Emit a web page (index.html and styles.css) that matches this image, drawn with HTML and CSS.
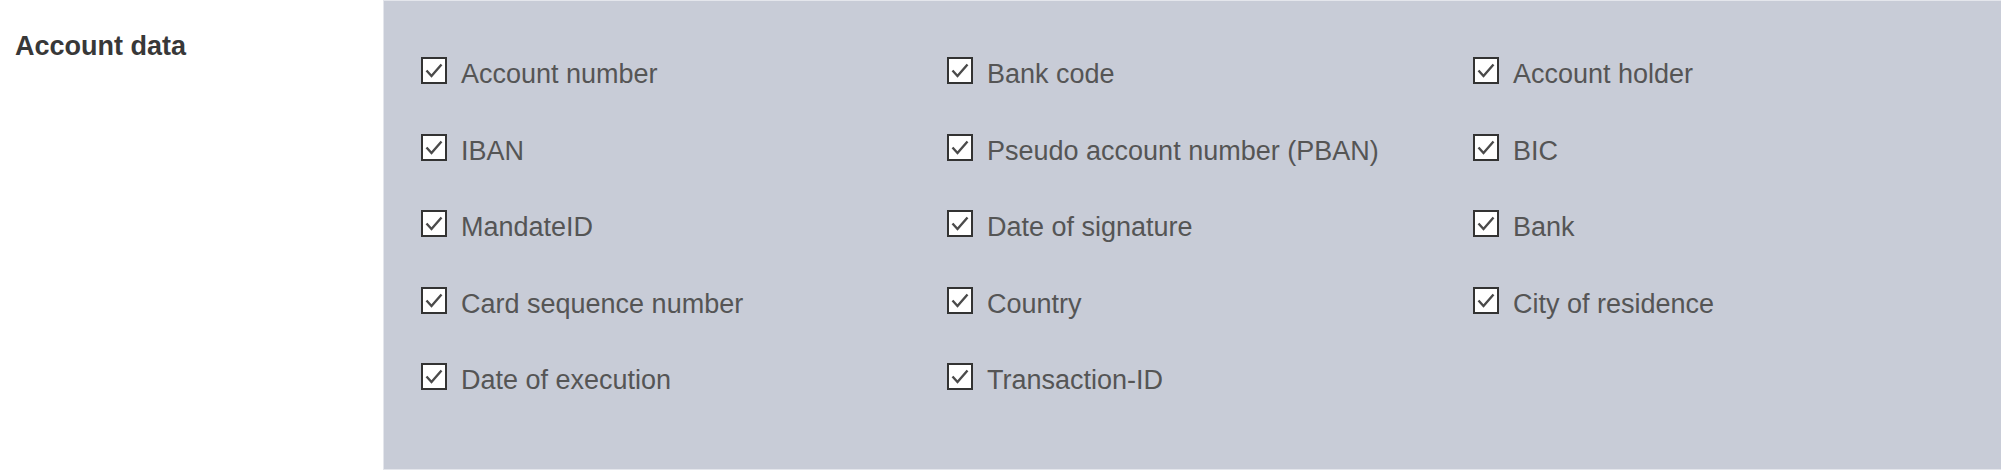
FILE: index.html
```html
<!DOCTYPE html>
<html>
<head>
<meta charset="utf-8">
<link rel="stylesheet" href="styles.css">
</head>
<body>
<div class="section">
  <div class="section-label">Account data</div>
  <div class="panel">
    <div class="grid">
      <label class="item"><svg class="cb" viewBox="0 0 26 27"><rect x="1" y="1" width="24" height="25" fill="#fff" stroke="#333" stroke-width="2"/><polyline points="5.5,13.5 10.5,19 20.5,7.5" fill="none" stroke="#4a4a4a" stroke-width="2.4"/></svg>Account number</label>
      <label class="item"><svg class="cb" viewBox="0 0 26 27"><rect x="1" y="1" width="24" height="25" fill="#fff" stroke="#333" stroke-width="2"/><polyline points="5.5,13.5 10.5,19 20.5,7.5" fill="none" stroke="#4a4a4a" stroke-width="2.4"/></svg>Bank code</label>
      <label class="item"><svg class="cb" viewBox="0 0 26 27"><rect x="1" y="1" width="24" height="25" fill="#fff" stroke="#333" stroke-width="2"/><polyline points="5.5,13.5 10.5,19 20.5,7.5" fill="none" stroke="#4a4a4a" stroke-width="2.4"/></svg>Account holder</label>
      <label class="item"><svg class="cb" viewBox="0 0 26 27"><rect x="1" y="1" width="24" height="25" fill="#fff" stroke="#333" stroke-width="2"/><polyline points="5.5,13.5 10.5,19 20.5,7.5" fill="none" stroke="#4a4a4a" stroke-width="2.4"/></svg>IBAN</label>
      <label class="item"><svg class="cb" viewBox="0 0 26 27"><rect x="1" y="1" width="24" height="25" fill="#fff" stroke="#333" stroke-width="2"/><polyline points="5.5,13.5 10.5,19 20.5,7.5" fill="none" stroke="#4a4a4a" stroke-width="2.4"/></svg>Pseudo account number (PBAN)</label>
      <label class="item"><svg class="cb" viewBox="0 0 26 27"><rect x="1" y="1" width="24" height="25" fill="#fff" stroke="#333" stroke-width="2"/><polyline points="5.5,13.5 10.5,19 20.5,7.5" fill="none" stroke="#4a4a4a" stroke-width="2.4"/></svg>BIC</label>
      <label class="item"><svg class="cb" viewBox="0 0 26 27"><rect x="1" y="1" width="24" height="25" fill="#fff" stroke="#333" stroke-width="2"/><polyline points="5.5,13.5 10.5,19 20.5,7.5" fill="none" stroke="#4a4a4a" stroke-width="2.4"/></svg>MandateID</label>
      <label class="item"><svg class="cb" viewBox="0 0 26 27"><rect x="1" y="1" width="24" height="25" fill="#fff" stroke="#333" stroke-width="2"/><polyline points="5.5,13.5 10.5,19 20.5,7.5" fill="none" stroke="#4a4a4a" stroke-width="2.4"/></svg>Date of signature</label>
      <label class="item"><svg class="cb" viewBox="0 0 26 27"><rect x="1" y="1" width="24" height="25" fill="#fff" stroke="#333" stroke-width="2"/><polyline points="5.5,13.5 10.5,19 20.5,7.5" fill="none" stroke="#4a4a4a" stroke-width="2.4"/></svg>Bank</label>
      <label class="item"><svg class="cb" viewBox="0 0 26 27"><rect x="1" y="1" width="24" height="25" fill="#fff" stroke="#333" stroke-width="2"/><polyline points="5.5,13.5 10.5,19 20.5,7.5" fill="none" stroke="#4a4a4a" stroke-width="2.4"/></svg>Card sequence number</label>
      <label class="item"><svg class="cb" viewBox="0 0 26 27"><rect x="1" y="1" width="24" height="25" fill="#fff" stroke="#333" stroke-width="2"/><polyline points="5.5,13.5 10.5,19 20.5,7.5" fill="none" stroke="#4a4a4a" stroke-width="2.4"/></svg>Country</label>
      <label class="item"><svg class="cb" viewBox="0 0 26 27"><rect x="1" y="1" width="24" height="25" fill="#fff" stroke="#333" stroke-width="2"/><polyline points="5.5,13.5 10.5,19 20.5,7.5" fill="none" stroke="#4a4a4a" stroke-width="2.4"/></svg>City of residence</label>
      <label class="item"><svg class="cb" viewBox="0 0 26 27"><rect x="1" y="1" width="24" height="25" fill="#fff" stroke="#333" stroke-width="2"/><polyline points="5.5,13.5 10.5,19 20.5,7.5" fill="none" stroke="#4a4a4a" stroke-width="2.4"/></svg>Date of execution</label>
      <label class="item"><svg class="cb" viewBox="0 0 26 27"><rect x="1" y="1" width="24" height="25" fill="#fff" stroke="#333" stroke-width="2"/><polyline points="5.5,13.5 10.5,19 20.5,7.5" fill="none" stroke="#4a4a4a" stroke-width="2.4"/></svg>Transaction-ID</label>
    </div>
  </div>
</div>
</body>
</html>
```
FILE: styles.css
```css
html, body {
  margin: 0;
  padding: 0;
  background: #ffffff;
}
body {
  font-family: "Liberation Sans", Arial, sans-serif;
}
.section {
  display: flex;
  width: 2001px;
  height: 472px;
}
.section-label {
  width: 368px;
  padding-left: 15px;
  padding-top: 31px;
  font-size: 27px;
  line-height: 30px;
  font-weight: bold;
  color: #383838;
  box-sizing: content-box;
}
.panel {
  flex: 1;
  height: 470px;
  box-sizing: border-box;
  background: #c8ccd7;
  border: 1px solid #e4e6ec;
  border-right: none;
  padding: 35px 0 0 37px;
}
.grid {
  display: grid;
  grid-template-columns: 526px 526px 526px;
  grid-auto-rows: 76.5px;
}
.item {
  font-size: 27px;
  line-height: 76.5px;
  color: #555555;
  white-space: nowrap;
}
.cb {
  width: 26px;
  height: 27px;
  margin-right: 14px;
  vertical-align: -1px;
}
```
